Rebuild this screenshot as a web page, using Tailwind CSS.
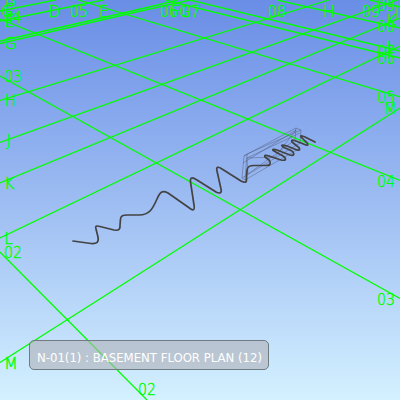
<!DOCTYPE html>
<html lang="en"><head><meta charset="utf-8"><title>Floor plan</title>
<script src="https://cdn.jsdelivr.net/npm/@tailwindcss/browser@4"></script></head>
<body class="overflow-hidden">
<main class="relative w-[400px] h-[400px] overflow-hidden bg-linear-to-b from-[#6a8de6] via-[#9dbcf2] to-[#d4f1ff]">
<svg class="block" width="400" height="400" viewBox="0 0 400 400" fill="none">
<g stroke="#0f0" stroke-width="1.3">
<path d="M0 362.5L400 108M0 238L400 46M0 183L400 18M0 142.5L400 -1M0 100.5L329 0M0 43.5L134 12.5L190 0M0 41L134 10.5L178 0M0 21L103 0M0 11L55 0"/>
<path d="M0 252L147 400M0 76L400 298.5M0 19L400 180.5M78 0L400 97M165 0L400 58M190 0L400 51M277 0L400 28M370 0L400 7"/>
</g>
<g stroke="#4c5370" stroke-opacity=".55" stroke-width=".8">
<path d="M244 156L296 128L301 130L247 154ZM244 156L242 178L245 180L247 154M242 178L300 143L301 130M296 128L295 140L248 174L247 158L300 133M243 163L296 130M247 158L275 157L296 130M245 180L300 148"/>
</g>
<path stroke="#434343" stroke-width="1.7" stroke-linecap="round" stroke-linejoin="round" d="M73 241L91 243.5C97 244 99 242 98 237L96 229C95 226 96 225.500 100 226.500L114 230C119 231 120.500 229 120 225L120.500 219C121 215.500 123 215 127 215L139 215C150 215 153 208 157 199C160 192 162 190 168 193L188 207C193 211 195 211 194 205L190.500 182C190 177 192 177 197 180L216 192C220 194 222 193 221 189L217 171C216 167 218 166 222 169L241 181C245 183 247 183 246.500 178L247 170C247.500 166 250 165.500 254 165.500L266 165.500C271 165.500 271 163 269 160L265 157C264 155 266 155 269 156L281 160C286 161 287 159 283 156L274 151C271 149 274 149 277 150L290 155C294 156 295 154 292 151L283 147C280 144.500 283 145 287 146L297 150C301 151 300 148 297 146L292 142C291 139 293 140 296 141L306 145C309 146 308 143 305 141L301 137C300 135 302 136 305 137L315 142"/>
</svg>
<div class="absolute left-[29px] top-[340px] w-[240px] h-[30px] rounded-[5px] border border-[#707b82] bg-[#b1b1b6]/60 pl-[7px]"><svg class="block" width="230" height="28"><text x="0" y="21" fill="white" font-family="DejaVu Sans Condensed, DejaVu Sans, sans-serif" font-stretch="condensed" font-size="12" textLength="225" lengthAdjust="spacingAndGlyphs">N-01(1) : BASEMENT FLOOR PLAN (12)</text></svg></div>
<svg class="absolute inset-0" width="400" height="400" fill="#0f0" stroke="#0f0" stroke-width=".45" font-family="DejaVu Sans Light, DejaVu Sans, sans-serif" font-size="16" font-weight="200">
<text x="1" y="17">G</text><text x="4" y="15">C</text><text x="5" y="6">B</text><g transform="translate(4 23) scale(.88 1)"><text>04</text></g><text x="4" y="27">E</text><text x="4" y="49">G</text><g transform="translate(4 82) scale(.88 1)"><text>03</text></g><text x="4" y="106">H</text><text x="6" y="146">J</text><text x="4" y="189">K</text><text x="4" y="244">L</text><g transform="translate(4 258) scale(.88 1)"><text>02</text></g><text x="4" y="369">M</text>
<text x="48" y="17">D</text><g transform="translate(70 17) scale(.88 1)"><text>05</text></g><text x="99" y="17">E</text><g transform="translate(160 17) scale(.88 1)"><text>06</text></g><text x="171" y="17">F</text><text x="179" y="17">G</text><g transform="translate(182 17) scale(.88 1)"><text>07</text></g><g transform="translate(268 17) scale(.88 1)"><text>08</text></g><text x="323" y="17">H</text><g transform="translate(362 17) scale(.88 1)"><text>09</text></g><text x="395" y="17">J</text>
<g transform="translate(377 11) scale(.88 1)"><text>09</text></g><text x="386" y="26">K</text><g transform="translate(377 32) scale(.88 1)"><text>08</text></g><text x="386" y="53">L</text><g transform="translate(377 57) scale(.88 1)"><text>07</text></g><g transform="translate(377 64) scale(.88 1)"><text>06</text></g><g transform="translate(377 103) scale(.88 1)"><text>05</text></g><text x="383" y="114">M</text><g transform="translate(377 187) scale(.88 1)"><text>04</text></g><g transform="translate(377 305) scale(.88 1)"><text>03</text></g><g transform="translate(138 395) scale(.88 1)"><text>02</text></g>
</svg>
</main></body></html>
